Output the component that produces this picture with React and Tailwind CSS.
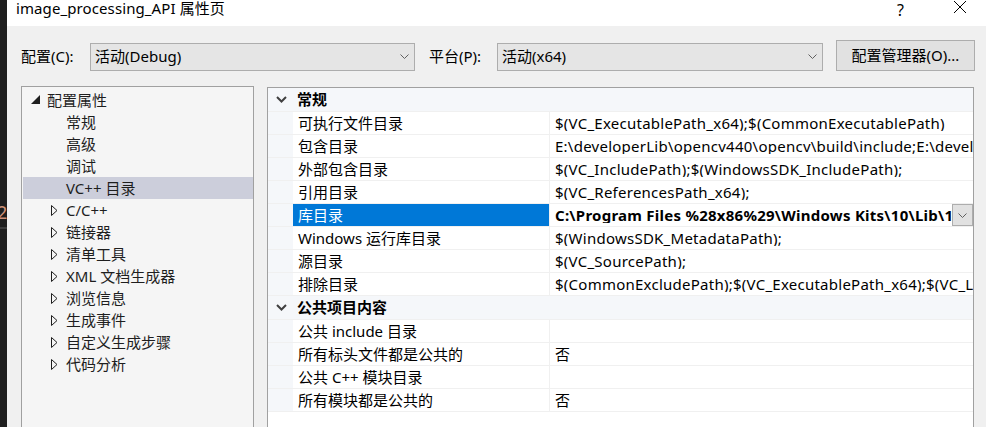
import React from "react";

const FONT = { fontFamily: '"Noto Sans", "Noto Sans CJK SC", sans-serif' };

// 左侧树：配置属性及其子项
const treeItems = [
  { label: "常规" },
  { label: "高级" },
  { label: "调试" },
  { label: "VC++ 目录", active: true },
  { label: "C/C++", collapsed: true },
  { label: "链接器", collapsed: true },
  { label: "清单工具", collapsed: true },
  { label: "XML 文档生成器", collapsed: true },
  { label: "浏览信息", collapsed: true },
  { label: "生成事件", collapsed: true },
  { label: "自定义生成步骤", collapsed: true },
  { label: "代码分析", collapsed: true },
];

// 右侧属性表
const sections = [
  {
    title: "常规",
    rows: [
      { name: "可执行文件目录", value: "$(VC_ExecutablePath_x64);$(CommonExecutablePath)" },
      { name: "包含目录", value: "E:\\developerLib\\opencv440\\opencv\\build\\include;E:\\developerLib\\opencv440\\opencv\\build\\include\\opencv2" },
      { name: "外部包含目录", value: "$(VC_IncludePath);$(WindowsSDK_IncludePath);" },
      { name: "引用目录", value: "$(VC_ReferencesPath_x64);" },
      { name: "库目录", value: "C:\\Program Files %28x86%29\\Windows Kits\\10\\Lib\\10.0.19041.0\\um\\x64", selected: true },
      { name: "Windows 运行库目录", value: "$(WindowsSDK_MetadataPath);" },
      { name: "源目录", value: "$(VC_SourcePath);" },
      { name: "排除目录", value: "$(CommonExcludePath);$(VC_ExecutablePath_x64);$(VC_LibraryPath_x64)" },
    ],
  },
  {
    title: "公共项目内容",
    rows: [
      { name: "公共 include 目录", value: "" },
      { name: "所有标头文件都是公共的", value: "否" },
      { name: "公共 C++ 模块目录", value: "" },
      { name: "所有模块都是公共的", value: "否" },
    ],
  },
];

const SmallChevron = () => (
  <svg width="9" height="5" viewBox="0 0 9 5" className="shrink-0">
    <polyline points="0.5,0.5 4.5,4.5 8.5,0.5" fill="none" stroke="#606060" strokeWidth="1" />
  </svg>
);

const SectionChevron = () => (
  <svg width="11" height="7" viewBox="0 0 11 7" className="shrink-0">
    <polyline points="1,1 5.5,5.5 10,1" fill="none" stroke="#404040" strokeWidth="2" />
  </svg>
);

const Combo = ({ width, text }) => (
  <div
    className={`${width} h-[28px] flex items-center justify-between pl-[4px] pr-[5px] bg-[#e5e5e5] border border-[#adadad] text-[15px] text-black`}
  >
    <span className="leading-none">{text}</span>
    <SmallChevron />
  </div>
);

const TreeRow = ({ item }) => (
  <div
    className={`h-[22px] flex items-center ${item.active ? "bg-[#cccedb]" : ""}`}
  >
    <div className="w-[43px] flex justify-end pr-[8px]">
      {item.collapsed && (
        <svg width="7" height="11" viewBox="0 0 7 11">
          <polygon points="0.5,0.5 6,5.5 0.5,10.5" fill="none" stroke="#1e1e1e" strokeWidth="1" />
        </svg>
      )}
    </div>
    <span className="text-[15px] leading-none text-[#1e1e1e] whitespace-nowrap">{item.label}</span>
  </div>
);

const PropRow = ({ row }) => (
  <div className="h-[23px] flex border-b border-[#f0f0f0]">
    <div className="w-[25px] shrink-0 bg-[#f5f7fa]" />
    <div
      className={`w-[257px] shrink-0 flex items-center pl-[5px] text-[15px] leading-none whitespace-nowrap border-r border-[#f0f0f0] ${
        row.selected ? "bg-[#0078d7] text-white" : "bg-white text-black"
      }`}
    >
      {row.name}
    </div>
    <div className="flex-1 min-w-0 flex items-center bg-white">
      <span
        className={`flex-1 min-w-0 overflow-hidden whitespace-nowrap pl-[5px] text-[15px] tracking-[0.25px] leading-none text-black ${
          row.selected ? "font-bold" : ""
        }`}
      >
        {row.value}
      </span>
      {row.selected && (
        <div className="w-[21px] h-[22px] shrink-0 flex items-center justify-center bg-[#e1e1e1] border border-[#adadad]">
          <SmallChevron />
        </div>
      )}
    </div>
  </div>
);

export default function App() {
  return (
    <div className="w-[986px] h-[427px] flex overflow-hidden bg-[#f0f0f0]" style={FONT}>
      {/* 背后编辑器露出的一条 */}
      <div className="w-[7px] shrink-0 bg-[#1e1e1e] flex flex-col pt-[203px] overflow-hidden">
        <span className="text-[18px] leading-none text-[#ce9178] -ml-[3px]">2</span>
        <div className="mt-[6px] h-[2px] bg-[#3c3c3c]" />
      </div>

      <div className="flex-1 flex flex-col min-w-0">
        {/* 标题栏 */}
        <div className="h-[26px] shrink-0 bg-white flex items-start justify-between">
          <span className="pl-[9px] -mt-[3px] text-[15px] tracking-[0.1px] text-black whitespace-nowrap">
            image_processing_API 属性页
          </span>
          <div className="flex items-start -mt-[2px] text-black">
            <span className="text-[16px] mr-[49px]">?</span>
            <svg width="14" height="14" viewBox="0 0 14 14" className="mt-[2px] mr-[19px]">
              <path d="M1 1 L13 13 M13 1 L1 13" stroke="#000" strokeWidth="1" />
            </svg>
          </div>
        </div>

        {/* 配置 / 平台 */}
        <div className="h-[60px] shrink-0 flex items-center pl-[14px] pt-[1px]">
          <span className="w-[69px] text-[15px] text-black">配置(C):</span>
          <Combo width="w-[325px]" text="活动(Debug)" />
          <span className="w-[82px] pl-[14px] text-[15px] text-black">平台(P):</span>
          <Combo width="w-[326px]" text="活动(x64)" />
          <button className="ml-[13px] w-[139px] h-[31px] -mt-[3px] bg-[#e1e1e1] border border-[#adadad] text-[15px] text-black">
            配置管理器(O)...
          </button>
        </div>

        {/* 主体两栏 */}
        <div className="flex-1 flex pl-[14px] gap-[13px] min-h-0">
          <div className="w-[233px] shrink-0 bg-[#f5f5f5] border-l border-t border-r border-[#a0a0a0] pt-[2px] pl-[1px]">
            <div className="h-[22px] flex items-center">
              <svg width="9" height="9" viewBox="0 0 9 9" className="ml-[8px] -mt-[1px]">
                <polygon points="9,0 9,9 0,9" fill="#1e1e1e" />
              </svg>
              <span className="ml-[7px] text-[15px] leading-none text-[#1e1e1e]">配置属性</span>
            </div>
            {treeItems.map((item) => (
              <TreeRow key={item.label} item={item} />
            ))}
          </div>

          <div className="w-[707px] shrink-0 mt-[1px] bg-white border-l border-t border-r border-[#a0a0a0] flex flex-col">
            {sections.map((section) => (
              <div key={section.title}>
                <div className="h-[24px] flex items-center bg-[#f5f7fa] border-b border-[#f0f0f0]">
                  <div className="w-[25px] flex justify-center pl-[2px]">
                    <SectionChevron />
                  </div>
                  <span className="pl-[4px] text-[15px] leading-none font-bold text-black">{section.title}</span>
                </div>
                {section.rows.map((row) => (
                  <PropRow key={row.name} row={row} />
                ))}
              </div>
            ))}
          </div>
        </div>
      </div>
    </div>
  );
}
